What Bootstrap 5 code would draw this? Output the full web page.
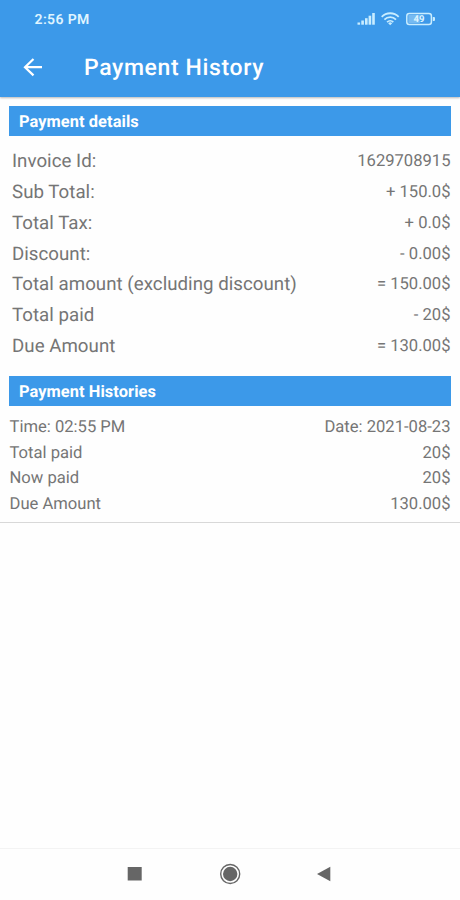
<!DOCTYPE html>
<html lang="en">
<head>
<meta charset="utf-8">
<meta name="viewport" content="width=device-width, initial-scale=1">
<title>Payment History</title>
<link href="https://cdn.jsdelivr.net/npm/bootstrap@5.3.0/dist/css/bootstrap.min.css" rel="stylesheet">
<style>
  body { font-family: Roboto, sans-serif; color: #757575; background: #fefefe; text-rendering: geometricPrecision; }
  .screen { height: 900px; overflow: hidden; }
  .brand-bg { background: #3c99e9; color: #fff; }
  .app-top { height: 97px; box-shadow: 0 1px 2px rgba(0,0,0,.28); }
  .status-row { height: 38px; padding: 0 25px 0 34.5px; }
  .clock { font-size: 14px; font-weight: 600; letter-spacing: .38px; color: #dff4ff; line-height: 38px; padding-top: 2px; }
  .title-row { height: 59px; padding-left: 20px; }
  .page-title { font-size: 23px; font-weight: 500; letter-spacing: .63px; line-height: 59px; margin-left: 38px; }
  .content { padding: 9px 9.5px 0 9px; }
  .section-bar { height: 30px; line-height: 33px; padding-left: 10px; font-size: 16.4px; font-weight: 700; letter-spacing: .07px; }
  .summary { padding: 10px 0 0 3px; }
  .summary-row { height: 30.85px; line-height: 30.85px; font-size: 18.7px; letter-spacing: .03px; }
  .amount { font-size: 16.6px; letter-spacing: 0; padding-top: 1px; }
  .second-bar { margin-top: 14px; }
  .history { padding: 9px 9.5px 4px 9.5px; border-bottom: 1px solid #d8d8d8; font-size: 16.6px; }
  .history-row { height: 25.7px; line-height: 25.7px; }
  .sys-nav { height: 52px; border-top: 1px solid #f3f3f3; padding-bottom: 2px; }
</style>
<script src="https://cdn.jsdelivr.net/npm/bootstrap@5.3.0/dist/js/bootstrap.bundle.min.js"></script>
</head>
<body>
<div class="screen d-flex flex-column">
  <header class="app-top brand-bg flex-shrink-0">
    <div class="status-row d-flex justify-content-between align-items-center">
      <span class="clock">2:56 PM</span>
      <svg width="80" height="20" viewBox="355 9 80 20" fill="none" aria-hidden="true">
        <g fill="#c9edff">
          <rect x="357.5" y="22.5" width="2.6" height="2.2"/>
          <rect x="361.3" y="20.5" width="2.6" height="4.2"/>
          <rect x="365" y="18.2" width="2.6" height="6.5"/>
          <rect x="368.6" y="15.7" width="2.6" height="9"/>
          <rect x="372.2" y="13" width="2.6" height="11.7"/>
        </g>
        <g stroke="#c9edff" stroke-width="1.8">
          <path d="M381.7 16.8a12 12 0 0 1 17 0"/>
          <path d="M384.4 19.6a8.2 8.2 0 0 1 11.6 0"/>
          <path d="M387.1 22.1a4.4 4.4 0 0 1 6.2 0"/>
        </g>
        <path d="M388.2 23.2a3 3 0 0 1 4 0l-2 2z" fill="#c9edff"/>
        <rect x="408.3" y="15" width="11.5" height="8" fill="#76baf1"/>
        <rect x="406.8" y="13.4" width="24.6" height="11" rx="2.5" stroke="#c9edff" stroke-width="1.5"/>
        <path d="M432.8 17v4h1.2q1 0 1-1v-2q0-1-1-1z" fill="#c9edff"/>
        <text x="419" y="22.2" text-anchor="middle" font-family="Roboto, sans-serif" font-size="9.500" font-weight="700" fill="#dff5ff">49</text>
      </svg>
    </div>
    <div class="title-row d-flex align-items-center">
      <svg width="26" height="26" viewBox="20 54.500 26 26" fill="none" stroke="#fff" stroke-width="2.2" aria-label="Back">
        <path d="M33.500 58.500 25 66.700l8.500 8.200M25 66.700H42"/>
      </svg>
      <h1 class="page-title mb-0">Payment History</h1>
    </div>
  </header>
  <main class="flex-grow-1">
    <div class="content">
      <h2 class="section-bar brand-bg mb-0">Payment details</h2>
      <div class="summary">
        <div class="summary-row d-flex justify-content-between"><span>Invoice Id:</span><span class="amount">1629708915</span></div>
        <div class="summary-row d-flex justify-content-between"><span>Sub Total:</span><span class="amount">+ 150.0$</span></div>
        <div class="summary-row d-flex justify-content-between"><span>Total Tax:</span><span class="amount">+ 0.0$</span></div>
        <div class="summary-row d-flex justify-content-between"><span>Discount:</span><span class="amount">- 0.00$</span></div>
        <div class="summary-row d-flex justify-content-between"><span>Total amount (excluding discount)</span><span class="amount">= 150.00$</span></div>
        <div class="summary-row d-flex justify-content-between"><span>Total paid</span><span class="amount">- 20$</span></div>
        <div class="summary-row d-flex justify-content-between"><span>Due Amount</span><span class="amount">= 130.00$</span></div>
      </div>
      <h2 class="section-bar second-bar brand-bg mb-0">Payment Histories</h2>
    </div>
    <div class="history">
      <div class="history-row d-flex justify-content-between"><span>Time: 02:55 PM</span><span>Date: 2021-08-23</span></div>
      <div class="history-row d-flex justify-content-between"><span>Total paid</span><span>20$</span></div>
      <div class="history-row d-flex justify-content-between"><span>Now paid</span><span>20$</span></div>
      <div class="history-row d-flex justify-content-between"><span>Due Amount</span><span>130.00$</span></div>
    </div>
  </main>
  <footer class="sys-nav flex-shrink-0 d-flex justify-content-center align-items-center">
    <svg width="220" height="30" viewBox="120 859 220 30" fill="#666" aria-hidden="true">
      <rect x="127.700" y="867" width="14" height="13.500"/>
      <circle cx="230.200" cy="874" r="9.500" fill="none" stroke="#666" stroke-width="1.400"/>
      <circle cx="230.200" cy="874" r="7.200"/>
      <path d="M317 874l13.300-7.200v14.400z"/>
    </svg>
  </footer>
</div>
</body>
</html>
